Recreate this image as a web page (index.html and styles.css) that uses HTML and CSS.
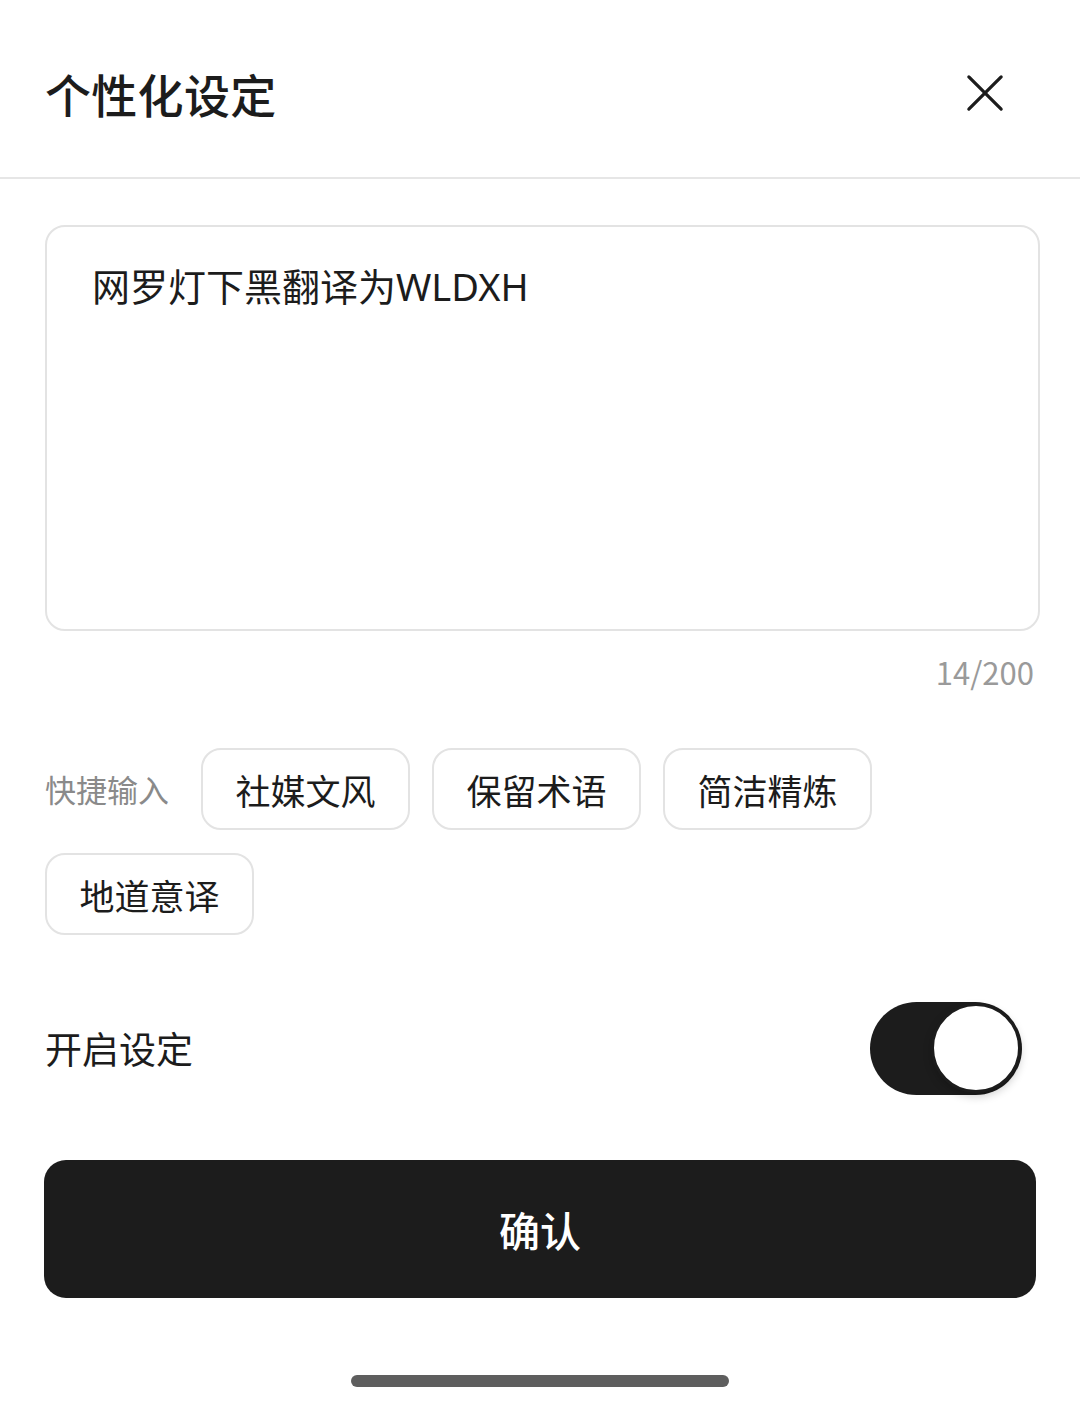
FILE: index.html
```html
<!DOCTYPE html>
<html lang="zh-CN">
<head>
<meta charset="utf-8">
<title>个性化设定</title>
<link rel="stylesheet" href="styles.css">
</head>
<body>
<div class="sheet">
  <header class="header">
    <h1 class="title">个性化设定</h1>
    <button class="close" aria-label="关闭">
      <svg viewBox="0 0 40 40" width="40" height="40"><path d="M3 3 L37 37 M37 3 L3 37" stroke="#1c1c1c" stroke-width="3.4" stroke-linecap="round" fill="none"/></svg>
    </button>
  </header>
  <main class="content">
    <div class="input-box">网罗灯下黑翻译为WLDXH</div>
    <div class="counter">14/200</div>
    <div class="quick">
      <span class="quick-label">快捷输入</span>
      <span class="chip">社媒文风</span>
      <span class="chip">保留术语</span>
      <span class="chip">简洁精炼</span>
      <span class="chip">地道意译</span>
    </div>
    <div class="setting-row">
      <span class="setting-label">开启设定</span>
      <span class="toggle"><span class="thumb"></span></span>
    </div>
    <button class="confirm">确认</button>
  </main>
  <div class="home-bar"></div>
</div>
</body>
</html>
```
FILE: styles.css
```css
* { box-sizing: border-box; }
html, body {
  margin: 0;
  padding: 0;
  background: #ffffff;
}
body {
  font-family: "Noto Sans CJK SC", "Noto Sans", sans-serif;
  color: #1c1c1c;
  width: 1080px;
}
.sheet {
  display: flex;
  flex-direction: column;
  height: 1405px;
}
.header {
  height: 179px;
  border-bottom: 2px solid #e6e6e6;
  display: flex;
  align-items: center;
  justify-content: space-between;
  padding: 18px 76px 10px 45px;
}
.title {
  margin: 0;
  font-size: 46px;
  font-weight: 500;
  letter-spacing: 0.3px;
  color: #1c1c1c;
}
.close {
  border: 0;
  background: transparent;
  padding: 0;
  width: 38px;
  height: 38px;
  display: flex;
}
.close svg {
  width: 38px;
  height: 38px;
}
.content {
  padding: 46px 40px 0 45px;
  display: flex;
  flex-direction: column;
}
.input-box {
  height: 406px;
  border: 2px solid #e3e3e3;
  border-radius: 20px;
  padding: 33px 45px;
  font-family: "Noto Sans", "Noto Sans CJK SC", sans-serif;
  font-size: 38px;
  line-height: 52px;
  color: #1c1c1c;
}
.counter {
  text-align: right;
  font-size: 31px;
  line-height: 44px;
  color: #9a9a9a;
  margin-top: 19px;
  padding-right: 6px;
}
.quick {
  margin-top: 54px;
  display: flex;
  flex-wrap: wrap;
  align-items: center;
  column-gap: 22px;
  row-gap: 23px;
}
.quick-label {
  font-size: 31px;
  color: #8a8a8a;
  margin-right: 10px;
  height: 82px;
  line-height: 82px;
}
.chip {
  height: 82px;
  width: 209px;
  border: 2px solid #e3e3e3;
  border-radius: 20px;
  display: flex;
  align-items: center;
  justify-content: center;
  font-size: 35px;
  color: #1c1c1c;
}
.setting-row {
  margin-top: 66px;
  display: flex;
  align-items: center;
  justify-content: space-between;
  height: 94px;
  padding-right: 18px;
}
.setting-label {
  font-size: 37px;
  color: #1c1c1c;
}
.toggle {
  width: 152px;
  height: 93px;
  border-radius: 47px;
  background: #1c1c1c;
  display: flex;
  align-items: center;
  justify-content: flex-end;
  padding-right: 1px;
  position: relative;
}
.thumb {
  width: 90px;
  height: 90px;
  border-radius: 50%;
  background: #ffffff;
  border: 3px solid #1c1c1c;
  box-shadow: 0 4px 8px rgba(0, 0, 0, 0.18);
}
.confirm {
  margin-top: 65px;
  height: 138px;
  width: 992px;
  margin-left: -1px;
  border: 0;
  border-radius: 22px;
  background: #1c1c1c;
  color: #ffffff;
  font-family: "Noto Sans CJK SC", "Noto Sans", sans-serif;
  font-size: 41px;
  font-weight: 500;
}
.home-bar {
  margin: auto auto 18px;
  width: 378px;
  height: 12px;
  border-radius: 6px;
  background: #5e5e5e;
}
```
